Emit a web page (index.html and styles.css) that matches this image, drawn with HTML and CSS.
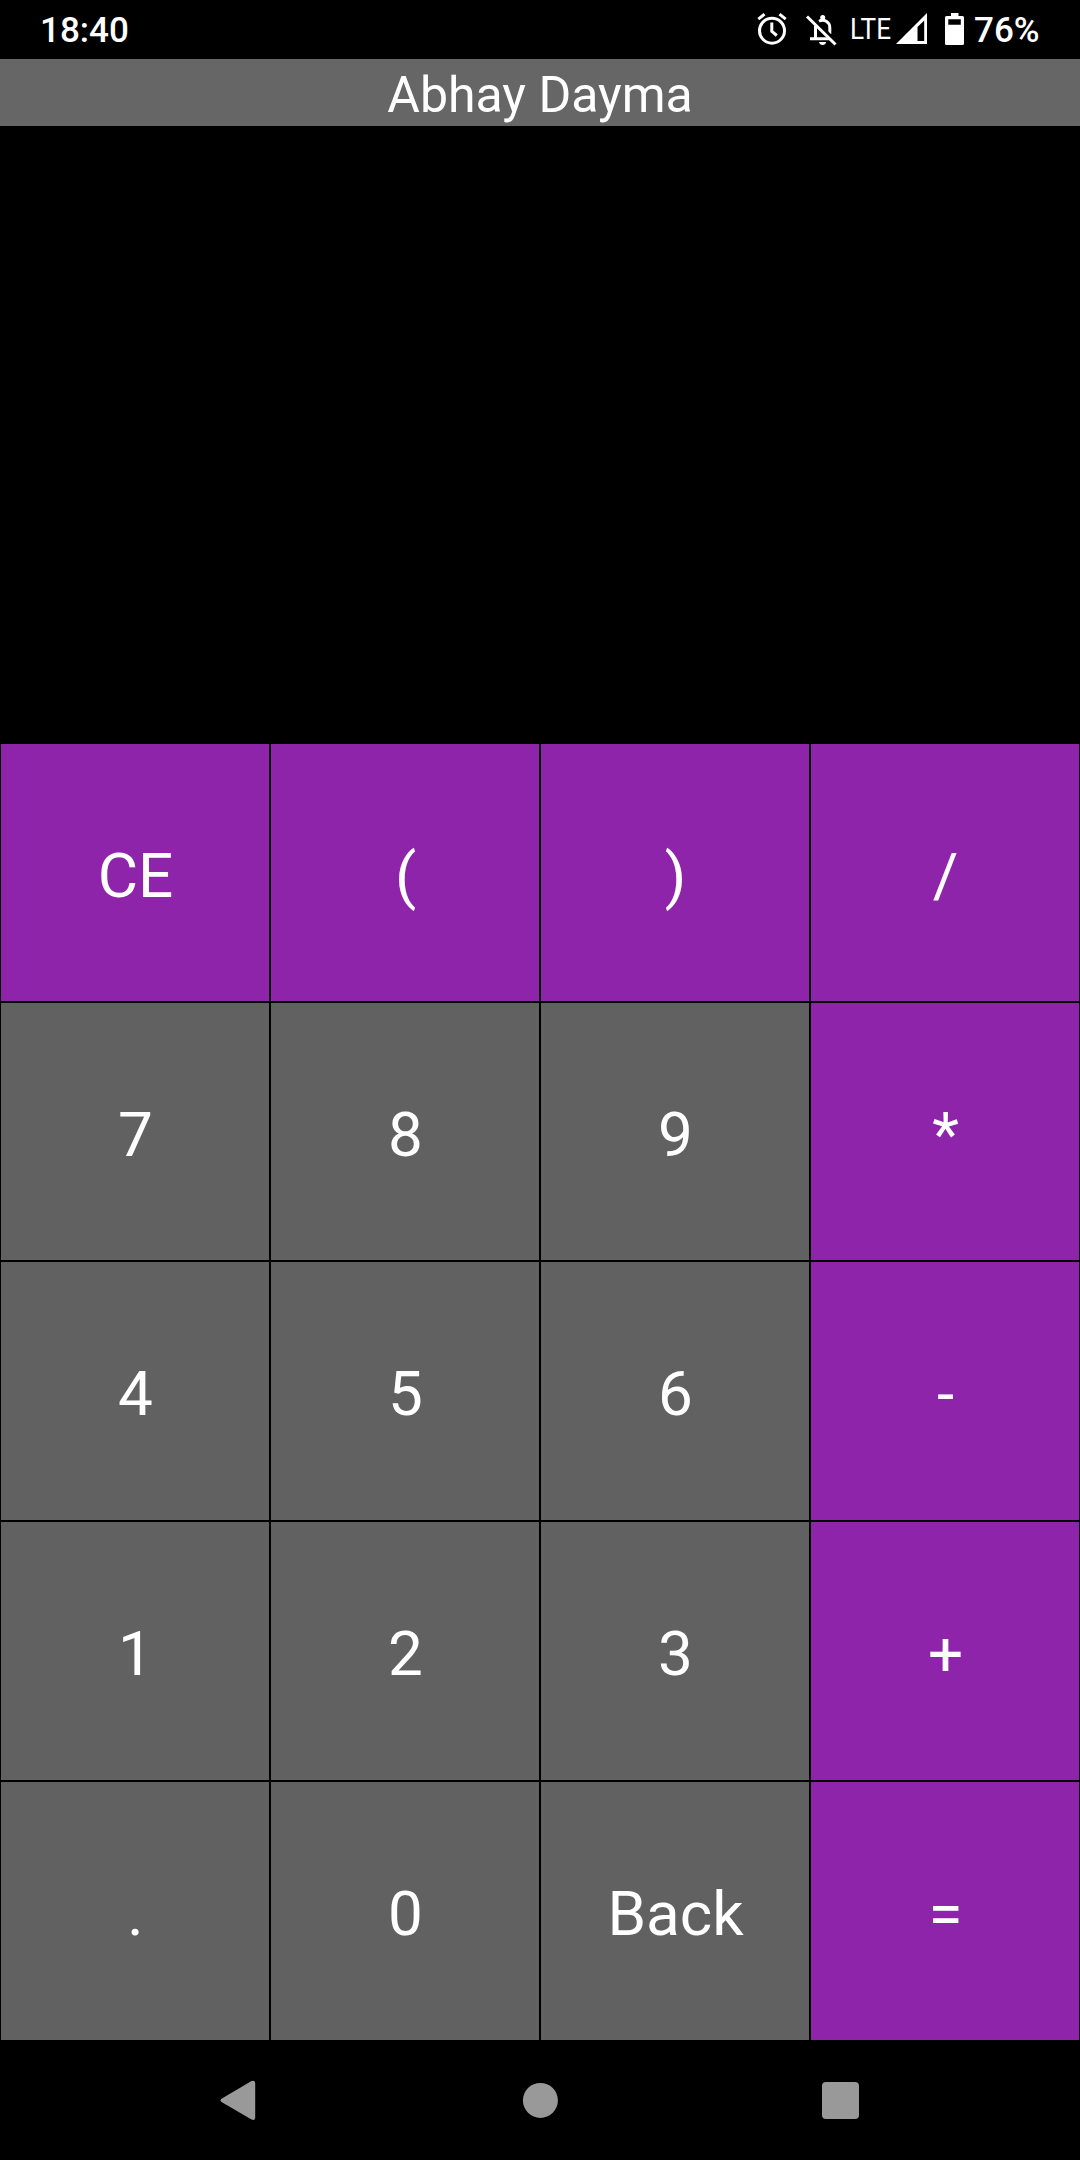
FILE: index.html
```html
<!DOCTYPE html>
<html lang="en"><head><meta charset="utf-8"><title>Calculator</title><link rel="stylesheet" href="styles.css"></head>
<body>
<header class="status"><span class="clock">18:40</span>
<div class="icons">
<svg class="alarm" viewBox="0 0 40 40"><g class="line"><circle cx="22" cy="20.700" r="12.500"/><path d="M8.300 9.200l6.200-5M29.500 4.200l6.200 5M21.800 12.500v8.800l5 4.200"/></g></svg>
<svg class="bell" viewBox="0 0 40 40"><g class="line"><path d="M15.500 28.500V15.500M19 11.200C24 8.500 29.800 11.800 29.800 17.500V24M10 28.700H29.500"/></g><circle cx="22.700" cy="7.500" r="2.500"/><path d="M19 32h7.200q-.7 2.900-3.600 2.900T19 32z"/><path class="gap" d="M9 4.500L37.500 32.500"/><path class="slash" d="M7 6.500L35.500 34.500"/></svg>
<span class="lte">LTE</span>
<svg class="signal" viewBox="0 0 31 31"><path fill-rule="evenodd" d="M0 31L31 0V31zM21.500 14V28H28.200V7.500z"/></svg>
<svg class="battery" viewBox="0 0 19 32"><path fill-rule="evenodd" d="M6 0h7.500v3H17.500q1.500 0 1.500 1.500V30.500q0 1.500-1.500 1.500H1.500Q0 32 0 30.500V4.500Q0 3 1.500 3H6zM3.300 6.300v5.400h12.500V6.300z"/></svg>
<span class="percent">76%</span></div></header>
<h1 class="title">Abhay Dayma</h1>
<div class="display"></div>
<main class="keys">
<button class="key op upper">CE</button><button class="key op upper">(</button><button class="key op upper">)</button><button class="key op upper">/</button>
<button class="key upper">7</button><button class="key upper">8</button><button class="key upper">9</button><button class="key op upper">*</button>
<button class="key">4</button><button class="key">5</button><button class="key">6</button><button class="key op">-</button>
<button class="key">1</button><button class="key">2</button><button class="key">3</button><button class="key op">+</button>
<button class="key">.</button><button class="key">0</button><button class="key">Back</button><button class="key op">=</button>
</main>
<nav class="nav">
<svg viewBox="0 0 40 40"><path d="M1.500 18.800L31.500 1Q35.200-.3 35.200 3.500V37.500Q35.200 41 31.500 39.600L1.500 22Q-.5 20.400 1.500 18.800z"/></svg>
<svg viewBox="0 0 40 40"><circle cx="20.400" cy="20.400" r="17.500"/></svg>
<svg viewBox="0 0 40 40"><rect x="2" y="2" width="37" height="37" rx="4"/></svg>
</nav>
</body></html>
```
FILE: styles.css
```css
*{box-sizing:border-box}
body{margin:0;width:1080px;height:2160px;background:#000;color:#fff;font-family:Roboto,sans-serif;display:flex;flex-direction:column;overflow:hidden}
svg{fill:#fff;display:block;flex:none}
.status{height:59px;display:flex;justify-content:space-between;padding:0 40px;font-size:35px;font-weight:500;line-height:62px}
.icons{display:flex;align-items:flex-start}
.alarm,.bell{width:40px;height:40px;margin-top:10px}
.bell{margin-left:10px}
.line{fill:none;stroke:#fff;stroke-width:3}
.gap{stroke:#000;stroke-width:3}
.slash{stroke:#fff;stroke-width:3}
.lte{width:46px;font-size:30px;font-weight:400;margin-left:10px;line-height:58px;transform:scaleX(.87);transform-origin:left}
.signal{width:31px;height:31px;margin-top:13px}
.battery{width:19px;height:32px;margin:13px 10px 0 18px}
.percent{width:66px}
.title{height:67px;margin:0;background:#666;text-align:center;font-size:50px;line-height:72px;font-weight:400}
.display{height:617px}
.keys{height:1298px;display:grid;grid-template-columns:repeat(4,1fr);grid-template-rows:259px 259px 260px 260px 260px}
.key{border:1px solid #000;border-radius:0;background:#616161;color:#fff;font:400 62px Roboto,sans-serif;padding:4px 0 0 1px}
.upper{padding-top:6px}
.op{background:#8e24aa}
.nav{flex:1;display:flex;justify-content:space-between;align-items:flex-start;padding:39px 220px 0}
.nav svg{width:40px;height:40px;fill:#999}
```
